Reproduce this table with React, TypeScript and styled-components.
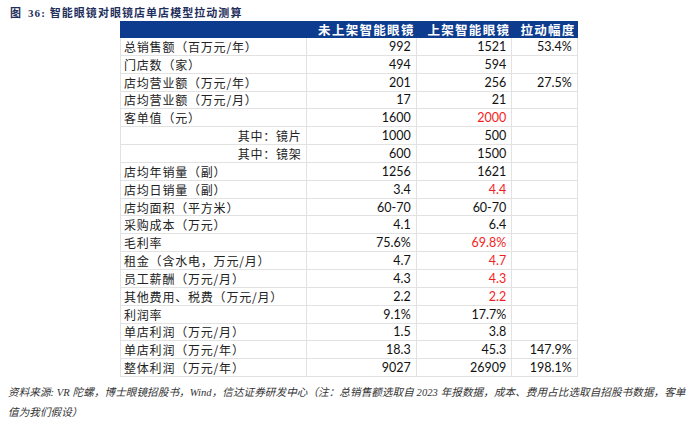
import React from "react";
import styled, { createGlobalStyle } from "styled-components";

const Global = createGlobalStyle`
  html, body { margin: 0; padding: 0; background: #fff; }
  body { width: 700px; height: 423px; overflow: hidden; }
`;

const Page = styled.div`
  padding: 5px 10px 0 8px;
  display: flex;
  flex-direction: column;
`;

const Title = styled.div`
  font-family: "Liberation Serif", "Noto Sans CJK SC", serif;
  font-weight: bold;
  font-size: 11px;
  line-height: 16px;
  height: 15px;
  color: #1f2f5c;
  padding-left: 2px;
  letter-spacing: 1.05px;
  span { margin-right: 6px; }
`;

const Table = styled.div`
  margin-top: 1px;
  margin-left: 112px;
  display: grid;
  grid-template-columns: 186.7px 110px 95.6px 65.4px;
  grid-template-rows: 17px repeat(19, 17.85px);
`;

const Head = styled.div`
  background: #0d3c8e;
  color: #fff;
  font-family: "Noto Sans CJK SC", sans-serif;
  font-weight: bold;
  font-size: 12.5px;
  letter-spacing: 1.3px;
  display: flex;
  align-items: center;
  justify-content: flex-end;
  padding-right: 2px;
  white-space: nowrap;
  overflow: hidden;
`;

const Label = styled.div<{ $right?: boolean }>`
  border-left: 1px solid #e2e2e2;
  border-right: 1px solid #e2e2e2;
  border-bottom: 1px solid #e2e2e2;
  font-family: "Noto Sans CJK SC", sans-serif;
  font-size: 12px;
  letter-spacing: 0.8px;
  color: #222;
  display: flex;
  align-items: center;
  justify-content: ${(p) => (p.$right ? "flex-end" : "flex-start")};
  padding: ${(p) => (p.$right ? "0 4px 0 0" : "0 0 0 3px")};
  white-space: nowrap;
  box-sizing: border-box;
`;

const Val = styled.div<{ $red?: boolean }>`
  border-right: 1px solid #e2e2e2;
  border-bottom: 1px solid #e2e2e2;
  font-family: "Lato", "Liberation Sans", sans-serif;
  font-size: 12.5px;
  color: ${(p) => (p.$red ? "#f21d1d" : "#111")};
  display: flex;
  align-items: center;
  justify-content: flex-end;
  padding-right: 5px;
  box-sizing: border-box;
`;

const Note = styled.div`
  margin-top: 6px;
  width: 682px;
  font-family: "Liberation Serif", "Noto Sans CJK SC", serif;
  font-style: italic;
  font-size: 10.6px;
  line-height: 20px;
  color: #333;
  letter-spacing: 0.05px;
`;

type Row = { l: string; a: string; b: string; c?: string; red?: boolean; right?: boolean };

const rows: Row[] = [
  { l: "总销售额（百万元/年）", a: "992", b: "1521", c: "53.4%" },
  { l: "门店数（家）", a: "494", b: "594" },
  { l: "店均营业额（万元/年）", a: "201", b: "256", c: "27.5%" },
  { l: "店均营业额（万元/月）", a: "17", b: "21" },
  { l: "客单值（元）", a: "1600", b: "2000", red: true },
  { l: "其中：镜片", a: "1000", b: "500", right: true },
  { l: "其中：镜架", a: "600", b: "1500", right: true },
  { l: "店均年销量（副）", a: "1256", b: "1621" },
  { l: "店均日销量（副）", a: "3.4", b: "4.4", red: true },
  { l: "店均面积（平方米）", a: "60-70", b: "60-70" },
  { l: "采购成本（万元）", a: "4.1", b: "6.4" },
  { l: "毛利率", a: "75.6%", b: "69.8%", red: true },
  { l: "租金（含水电，万元/月）", a: "4.7", b: "4.7", red: true },
  { l: "员工薪酬（万元/月）", a: "4.3", b: "4.3", red: true },
  { l: "其他费用、税费（万元/月）", a: "2.2", b: "2.2", red: true },
  { l: "利润率", a: "9.1%", b: "17.7%" },
  { l: "单店利润（万元/月）", a: "1.5", b: "3.8" },
  { l: "单店利润（万元/年）", a: "18.3", b: "45.3", c: "147.9%" },
  { l: "整体利润（万元/年）", a: "9027", b: "26909", c: "198.1%" },
];

export default function App() {
  return (
    <>
      <Global />
      <Page>
        <Title>
          <span>图</span>36: 智能眼镜对眼镜店单店模型拉动测算
        </Title>
        <Table>
          <Head />
          <Head>未上架智能眼镜</Head>
          <Head>上架智能眼镜</Head>
          <Head>拉动幅度</Head>
          {rows.map((r, i) => (
            <React.Fragment key={i}>
              <Label $right={r.right}>{r.l}</Label>
              <Val>{r.a}</Val>
              <Val $red={r.red}>{r.b}</Val>
              <Val>{r.c ?? ""}</Val>
            </React.Fragment>
          ))}
        </Table>
        <Note>
          资料来源: VR 陀螺，博士眼镜招股书，Wind，信达证券研发中心（注：总销售额选取自 2023 年报数据，成本、费用占比选取自招股书数据，客单值为我们假设）
        </Note>
      </Page>
    </>
  );
}
